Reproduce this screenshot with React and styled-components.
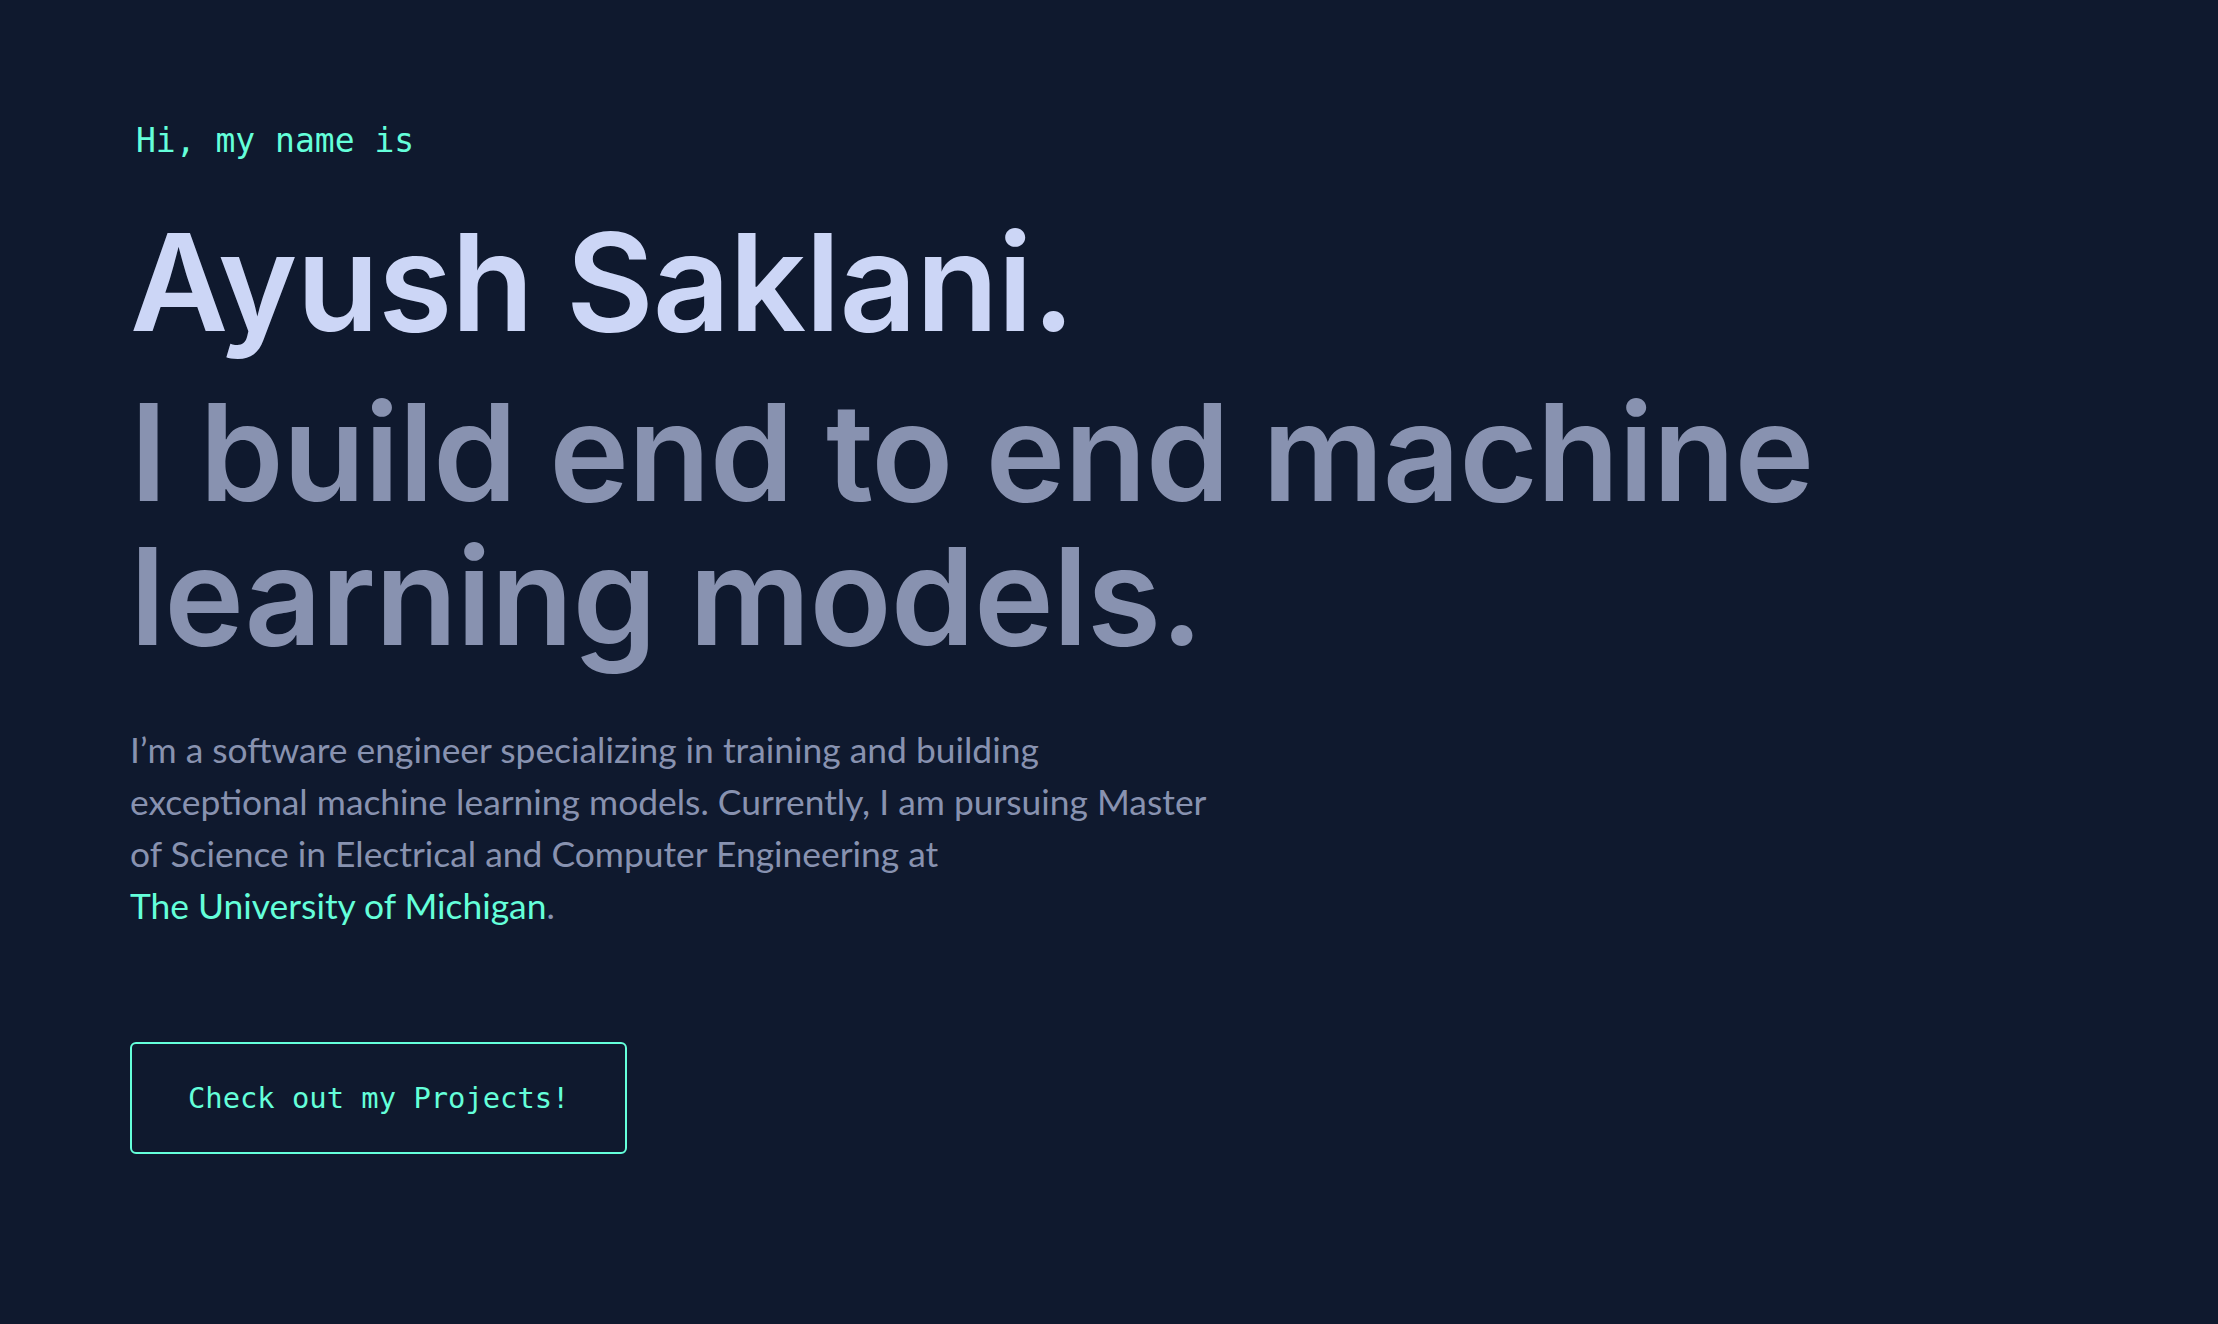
import React from "react";
import styled, { createGlobalStyle } from "styled-components";

const GlobalStyle = createGlobalStyle`
  html, body {
    margin: 0;
    padding: 0;
    background-color: #0f192e;
  }
  body {
    font-family: "Inter", "Noto Sans", sans-serif;
    -webkit-font-smoothing: antialiased;
  }
`;

const Hero = styled.section`
  min-height: 1324px;
  box-sizing: border-box;
  padding: 121px 0 0 130px;
  display: flex;
  flex-direction: column;
  align-items: flex-start;
`;

const Intro = styled.h1`
  margin: 0 0 49px 6px;
  font-family: "DejaVu Sans Mono", "Liberation Mono", monospace;
  font-size: 33px;
  line-height: 1.2;
  font-weight: 400;
  color: #64ffda;
`;

const BigHeading = styled.h2`
  margin: 0;
  font-family: "Inter", "Noto Sans", sans-serif;
  font-size: 135px;
  line-height: 144px;
  font-weight: 600;
  letter-spacing: -1px;
  color: ${({ $muted }) => ($muted ? "#8892b0" : "#ccd6f6")};
`;

const Tagline = styled(BigHeading)`
  margin-top: 26px;
  max-width: 1750px;
`;

const Bio = styled.p`
  margin: 56px 0 0;
  max-width: 1090px;
  font-family: "Lato", "Noto Sans", sans-serif;
  font-size: 35.4px;
  line-height: 52px;
  color: #8892b0;
`;

const Link = styled.a`
  display: inline-block;
  color: #64ffda;
  text-decoration: none;
`;

const Button = styled.a`
  margin-top: 110px;
  padding: 40px 56px;
  border: 2px solid #64ffda;
  border-radius: 6px;
  font-family: "DejaVu Sans Mono", "Liberation Mono", monospace;
  font-size: 28.8px;
  line-height: 1;
  color: #64ffda;
  text-decoration: none;
  cursor: pointer;
`;

export default function App() {
  return (
    <>
      <GlobalStyle />
      <Hero>
        <Intro>Hi, my name is</Intro>
        <BigHeading>Ayush Saklani.</BigHeading>
        <Tagline $muted>I build end to end machine learning models.</Tagline>
        <Bio>
          I’m a software engineer specializing in training and building
          exceptional machine learning models. Currently, I am pursuing Master
          of Science in Electrical and Computer Engineering at{" "}
          <Link href="#">The University of Michigan</Link>.
        </Bio>
        <Button href="#">Check out my Projects!</Button>
      </Hero>
    </>
  );
}
